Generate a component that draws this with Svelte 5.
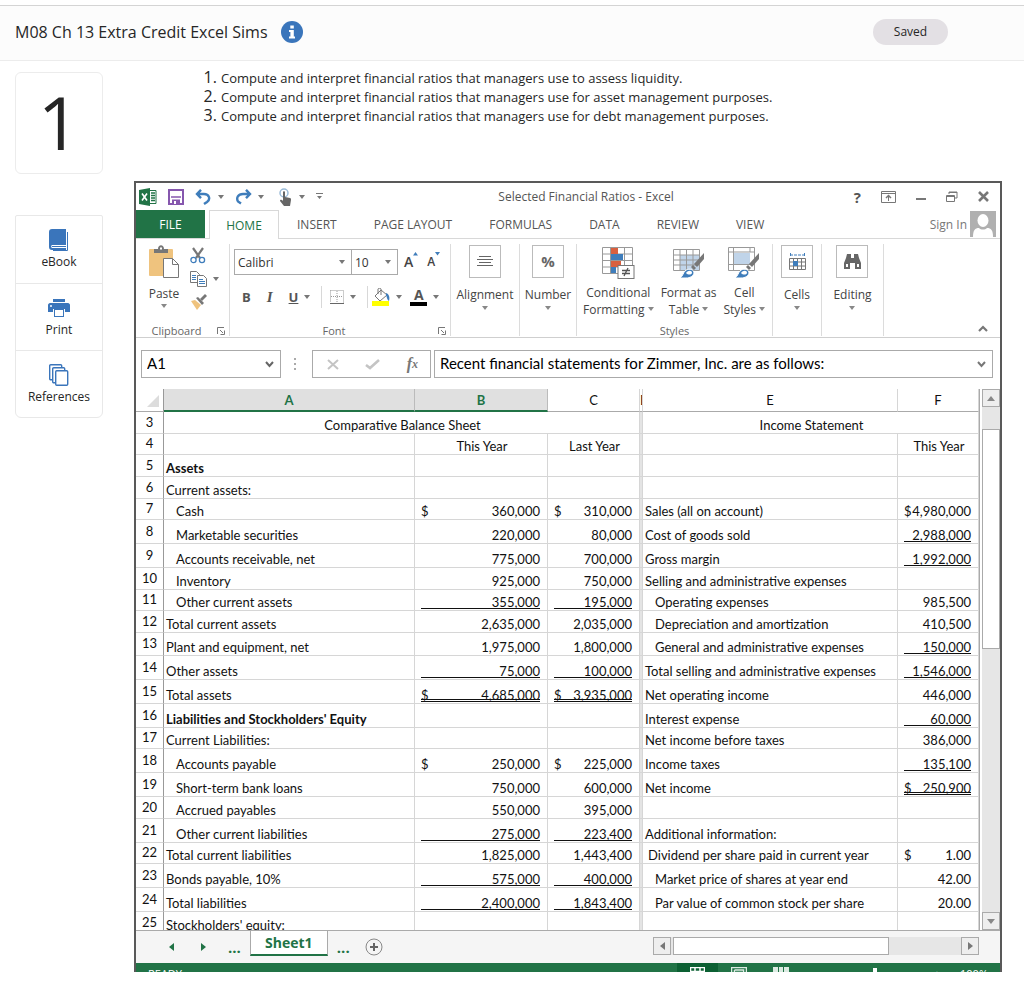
<script lang="ts">
    type Money = { v: string; d?: boolean; u?: 1 | 2 };
    type Row = {
        n: number;
        h: number;
        a?: string;
        bold?: boolean;
        ai?: boolean;
        b?: Money;
        c?: Money;
        e?: string;
        ei?: number;
        f?: Money;
    };

    const objectives = [
        'Compute and interpret financial ratios that managers use to assess liquidity.',
        'Compute and interpret financial ratios that managers use for asset management purposes.',
        'Compute and interpret financial ratios that managers use for debt management purposes.'
    ];

    const tabs = ['INSERT', 'PAGE LAYOUT', 'FORMULAS', 'DATA', 'REVIEW', 'VIEW'];

    const rows: Row[] = [
        { n: 5, h: 22, a: 'Assets', bold: true },
        { n: 6, h: 22, a: 'Current assets:' },
        { n: 7, h: 21, a: 'Cash', ai: true, b: { v: '360,000', d: true }, c: { v: '310,000', d: true }, e: 'Sales (all on account)', f: { v: '4,980,000', d: true } },
        { n: 8, h: 24, a: 'Marketable securities', ai: true, b: { v: '220,000' }, c: { v: '80,000' }, e: 'Cost of goods sold', f: { v: '2,988,000', u: 1 } },
        { n: 9, h: 24, a: 'Accounts receivable, net', ai: true, b: { v: '775,000' }, c: { v: '700,000' }, e: 'Gross margin', f: { v: '1,992,000', u: 1 } },
        { n: 10, h: 22, a: 'Inventory', ai: true, b: { v: '925,000' }, c: { v: '750,000' }, e: 'Selling and administrative expenses' },
        { n: 11, h: 21, a: 'Other current assets', ai: true, b: { v: '355,000', u: 1 }, c: { v: '195,000', u: 1 }, e: 'Operating expenses', ei: 10, f: { v: '985,500' } },
        { n: 12, h: 22, a: 'Total current assets', b: { v: '2,635,000' }, c: { v: '2,035,000' }, e: 'Depreciation and amortization', ei: 10, f: { v: '410,500' } },
        { n: 13, h: 23, a: 'Plant and equipment, net', b: { v: '1,975,000' }, c: { v: '1,800,000' }, e: 'General and administrative expenses', ei: 10, f: { v: '150,000', u: 1 } },
        { n: 14, h: 24, a: 'Other assets', b: { v: '75,000', u: 1 }, c: { v: '100,000', u: 1 }, e: 'Total selling and administrative expenses', f: { v: '1,546,000', u: 1 } },
        { n: 15, h: 24, a: 'Total assets', b: { v: '4,685,000', d: true, u: 2 }, c: { v: '3,935,000', d: true, u: 2 }, e: 'Net operating income', f: { v: '446,000' } },
        { n: 16, h: 24, a: "Liabilities and Stockholders' Equity", bold: true, e: 'Interest expense', f: { v: '60,000', u: 1 } },
        { n: 17, h: 21, a: 'Current Liabilities:', e: 'Net income before taxes', f: { v: '386,000' } },
        { n: 18, h: 24, a: 'Accounts payable', ai: true, b: { v: '250,000', d: true }, c: { v: '225,000', d: true }, e: 'Income taxes', f: { v: '135,100', u: 1 } },
        { n: 19, h: 24, a: 'Short-term bank loans', ai: true, b: { v: '750,000' }, c: { v: '600,000' }, e: 'Net income', f: { v: '250,900', d: true, u: 2 } },
        { n: 20, h: 22, a: 'Accrued payables', ai: true, b: { v: '550,000' }, c: { v: '395,000' } },
        { n: 21, h: 24, a: 'Other current liabilities', ai: true, b: { v: '275,000', u: 1 }, c: { v: '223,400', u: 1 }, e: 'Additional information:' },
        { n: 22, h: 21, a: 'Total current liabilities', b: { v: '1,825,000' }, c: { v: '1,443,400' }, e: 'Dividend per share paid in current year', ei: 4, f: { v: '1.00', d: true } },
        { n: 23, h: 24, a: 'Bonds payable, 10%', b: { v: '575,000', u: 1 }, c: { v: '400,000', u: 1 }, e: 'Market price of shares at year end', ei: 10, f: { v: '42.00' } },
        { n: 24, h: 24, a: 'Total liabilities', b: { v: '2,400,000', u: 1 }, c: { v: '1,843,400', u: 1 }, e: 'Par value of common stock per share', ei: 10, f: { v: '20.00' } },
        { n: 25, h: 22, a: "Stockholders' equity:" }
    ];

    let font = 'Calibri';
    let size = '10';
    let cell = 'A1';
    let formula = 'Recent financial statements for Zimmer, Inc. are as follows:';
</script>

{#snippet arrow()}
    <svg class="arrow" width="6" height="4" viewBox="0 0 6 4" aria-hidden="true"><path d="M0 0h6L3 4z" /></svg>
{/snippet}

{#snippet launcher()}
    <svg width="8" height="8" viewBox="0 0 8 8" fill="none" stroke="#777" aria-hidden="true">
        <path d="M.5 7V.5H7M3 3l3 3M7.500 3.500v4h-4" />
    </svg>
{/snippet}

{#snippet brush()}
    <path d="M31 7v6l-7 8-3-3z" fill="#777" />
    <path d="M20 19l3 3-2 2-3-3z" fill="#777" />
    <path d="M7 32c3-2 3-5 5-7 3-3 8-2 9 1 0 4-4 6-8 6z" fill="#3f7dbb" stroke="#fff" />
    <path d="M13 27c2-3 6-3 6 0-1 2-4 2-6 0z" fill="#fff" />
{/snippet}

{#snippet money(m: Money | undefined)}
    {#if m}
        <div class="money" class:single={m.u === 1} class:double={m.u === 2}>
            <span>{m.d ? '$' : ''}</span><span>{m.v}</span>
        </div>
    {/if}
{/snippet}

<header class="page-head">
    <h1>M08 Ch 13 Extra Credit Excel Sims</h1>
    <button class="info" aria-label="Information">
        <svg width="22" height="22" viewBox="0 0 22 22">
            <circle cx="11" cy="11" r="11" fill="#3a75bb" />
            <path d="M9.300 4.500h3.500v3H9.300zM8 9h4.800v6.500H14v2H8v-2h1.400V11H8z" fill="#fff" />
        </svg>
    </button>
    <button class="saved">Saved</button>
</header>

<div class="page">
    <aside>
        <div class="number">1</div>
        <nav>
            <a href="#ebook">
                <svg width="22" height="24" viewBox="0 0 22 24">
                    <path d="M4 1h14v16H4c-1 0-1 3 0 3h14v2H4c-2 0-3-1-3-3V4c0-2 1-3 3-3z" fill="#3a75bb" />
                    <path d="M4 18.500h14M19.500 4v18.500H5" fill="none" stroke="#3a75bb" />
                </svg>
                eBook
            </a>
            <a href="#print">
                <svg width="22" height="24" viewBox="0 0 22 24">
                    <path d="M5 3h12v3H5zM0 9c0-1 1-2 2-2h18c1 0 2 1 2 2v7h-5v-3H5v3H0z" fill="#3a75bb" />
                    <rect x="6.500" y="13.500" width="9" height="7" fill="#fff" stroke="#3a75bb" />
                    <circle cx="3" cy="10" r="1" fill="#fff" />
                </svg>
                Print
            </a>
            <a href="#references">
                <svg width="22" height="24" viewBox="0 0 22 24" fill="#fff" stroke="#3a75bb" stroke-width="1.400">
                    <rect x="1.700" y="1.700" width="12" height="15" rx="1" />
                    <rect x="4.700" y="4.700" width="12" height="15" rx="1" />
                    <rect x="7.700" y="7.700" width="12" height="14.500" rx="1" />
                </svg>
                References
            </a>
        </nav>
    </aside>

    <main>
        <ol>
            {#each objectives as text}
                <li>{text}</li>
            {/each}
        </ol>

        <section class="excel">
            <div class="titlebar">
                <div class="quick">
                    <svg width="18" height="18" viewBox="0 0 18 18">
                        <path d="M11 2.500h6v13h-6" fill="#fff" stroke="#217346" />
                        <path d="M12 5h4M12 7.500h4M12 10h4M12 12.500h4" stroke="#217346" stroke-width="1.500" />
                        <path d="M0 2l11-2v18L0 16z" fill="#217346" />
                        <path d="M3 5.500l5 7M8 5.500l-5 7" stroke="#fff" stroke-width="1.600" />
                    </svg>
                    <button aria-label="Save">
                        <svg width="16" height="16" viewBox="0 0 16 16" fill="none" stroke="#8657ae" stroke-width="2">
                            <path d="M1 1h14v14H1z" />
                            <path d="M3 8h10" stroke-width="1.500" />
                            <path d="M4 10.500h8V15H4z" fill="#8657ae" stroke="none" />
                            <path d="M6 12h2v3H6z" fill="#fff" stroke="none" />
                        </svg>
                    </button>
                    <button aria-label="Undo">
                        <svg width="17" height="16" viewBox="0 0 17 16" fill="none" stroke="#3f7dbb" stroke-width="2.400">
                            <path d="M6 .8L2 5l4 4.200M2 5h7c5 0 7 5 3 8l-3 2" />
                        </svg>
                        {@render arrow()}
                    </button>
                    <button aria-label="Redo">
                        <svg width="17" height="16" viewBox="0 0 17 16" fill="none" stroke="#3f7dbb" stroke-width="2.400">
                            <path d="M11 .8L15 5l-4 4.200M15 5H8C3 5 1 9 3 12.500l3 2" />
                        </svg>
                        {@render arrow()}
                    </button>
                    <button class="touch" aria-label="Touch mode">
                        <svg width="15" height="18" viewBox="0 0 15 18">
                            <circle cx="6" cy="5" r="4" fill="none" stroke="#9abbd8" stroke-width="1.500" />
                            <path d="M5 4c0-1 2-1 2 0v5l5 1c1 0 1 1 1 2l-1 6H6l-4-5c0-1 1-2 3 0z" fill="#666" />
                        </svg>
                        {@render arrow()}
                    </button>
                    <button aria-label="Customize">
                        <svg width="7" height="7" viewBox="0 0 7 7" fill="#777"><path d="M0 0h7v1H0zM1 3h5L3.500 6z" /></svg>
                    </button>
                </div>
                <div class="doc">Selected Financial Ratios - Excel</div>
                <div class="sys">
                    <button aria-label="Help"><b>?</b></button>
                    <button aria-label="Ribbon options">
                        <svg width="15" height="12" viewBox="0 0 15 12" fill="none" stroke="#777">
                            <path d="M.5.500h14v11H.5zM.5 2.500h14M7.500 10V5" />
                            <path d="M5 7l2.500-2.500L10 7" stroke-width="1.500" />
                        </svg>
                    </button>
                    <button aria-label="Minimize">
                        <svg width="10" height="10" viewBox="0 0 10 10"><path d="M0 6h10v2H0z" fill="#777" /></svg>
                    </button>
                    <button aria-label="Restore">
                        <svg width="12" height="11" viewBox="0 0 12 11" fill="none" stroke="#777">
                            <path d="M3 3V1h8v6H9M3 1.500h8" />
                            <path d="M.5 4.500h8v6h-8zM.5 5.500h8" />
                        </svg>
                    </button>
                    <button aria-label="Close">
                        <svg width="11" height="11" viewBox="0 0 11 11" stroke="#777" stroke-width="2.600"><path d="M1 1l9 9M10 1l-9 9" /></svg>
                    </button>
                </div>
            </div>

            <div class="tabs">
                <button class="file">FILE</button>
                <button class="home">HOME</button>
                {#each tabs as tab}
                    <button>{tab}</button>
                {/each}
                <a class="sign" href="#signin">
                    Sign In
                    <svg width="26" height="26" viewBox="0 0 26 26">
                        <rect width="26" height="26" fill="#b0b0b0" />
                        <ellipse cx="13" cy="9.500" rx="5.500" ry="6.500" fill="#fff" />
                        <path d="M3 26c0-7 2-9 6-9 2 2 6 2 8 0 4 0 6 2 6 9z" fill="#fff" />
                    </svg>
                </a>
            </div>

            <div class="ribbon">
                <div class="group clipboard">
                    <div class="body">
                        <button class="tool paste">
                            <svg width="32" height="34" viewBox="0 0 32 34">
                                <rect x="1" y="4" width="24" height="27" rx="1" fill="#efc37e" />
                                <path d="M6 8V4h4c0-5 6-5 6 0h4v4z" fill="#777" />
                                <rect x="12" y="2.500" width="2" height="2" fill="#fff" />
                                <path d="M15.500 13.500h9l6 6v13h-15z" fill="#fff" stroke="#777" />
                                <path d="M24.500 13.500v6h6" fill="none" stroke="#777" />
                            </svg>
                            <span>Paste</span>
                            {@render arrow()}
                        </button>
                        <div class="small">
                            <button aria-label="Cut">
                                <svg width="16" height="17" viewBox="0 0 16 17" fill="none">
                                    <path d="M3 1l7 10M13 1L6 11" stroke="#777" stroke-width="2.200" />
                                    <circle cx="3.500" cy="13" r="2.600" stroke="#3f7dbb" stroke-width="1.300" />
                                    <circle cx="12" cy="13" r="2.600" stroke="#3f7dbb" stroke-width="1.300" />
                                </svg>
                            </button>
                            <button aria-label="Copy">
                                <svg width="17" height="16" viewBox="0 0 17 16" fill="#fff" stroke="#777">
                                    <path d="M.5.500h6l3 3v8h-9z" />
                                    <path d="M2 4.500h4M2 6.500h4M2 8.500h4" stroke="#3f7dbb" />
                                    <path d="M7.500 4.500h6l3 3v8h-9z" />
                                    <path d="M9 8.500h4M9 10.500h6M9 12.500h6" stroke="#3f7dbb" />
                                </svg>
                                {@render arrow()}
                            </button>
                            <button aria-label="Format painter">
                                <svg width="17" height="16" viewBox="0 0 17 16">
                                    <path d="M1 7l4-1 6 5-4 5z" fill="#efc37e" />
                                    <path d="M6 4l2-1 6 6-2 2z" fill="#777" />
                                    <path d="M10 5l5-5 2 2-5 5z" fill="#777" />
                                </svg>
                            </button>
                        </div>
                    </div>
                    <div class="caption"><span>Clipboard</span>{@render launcher()}</div>
                </div>

                <div class="group font">
                    <div class="body col">
                        <div class="line pick">
                            <div class="select face">
                                <select aria-label="Font" bind:value={font}><option>Calibri</option></select>
                                {@render arrow()}
                            </div>
                            <div class="select pt">
                                <select aria-label="Font size" bind:value={size}><option>10</option></select>
                                {@render arrow()}
                            </div>
                            <button class="grow" aria-label="Increase font size">
                                A<svg width="5" height="4" viewBox="0 0 5 4"><path d="M0 3.500L2.500 0 5 3.500z" fill="#3f7dbb" /></svg>
                            </button>
                            <button class="grow shrink" aria-label="Decrease font size">
                                A<svg width="5" height="4" viewBox="0 0 5 4"><path d="M0 0h5L2.500 3.500z" fill="#3f7dbb" /></svg>
                            </button>
                        </div>
                        <div class="line format">
                            <button class="letter" aria-label="Bold"><b>B</b></button>
                            <button class="letter" aria-label="Italic"><i>I</i></button>
                            <button aria-label="Underline"><u>U</u>{@render arrow()}</button>
                            <span class="sep"></span>
                            <button aria-label="Borders">
                                <svg width="14" height="14" viewBox="0 0 14 14" fill="none" stroke="#999">
                                    <path d="M.5.500h13v12M.5.500v12M7 1v12M1 6.500h12" stroke-dasharray="1 1" />
                                    <path d="M0 13.500h14" stroke="#666" />
                                </svg>
                                {@render arrow()}
                            </button>
                            <span class="sep last"></span>
                            <button aria-label="Fill color">
                                <svg width="18" height="18" viewBox="0 0 18 18">
                                    <path d="M3 8l6-6 6 5-7 6z" fill="#fff" stroke="#777" />
                                    <path d="M6 6V1c0-1 3-1 3 0v6" fill="none" stroke="#777" />
                                    <path d="M14 5c3 1 4 4 3 8-2-1-2-4-3-6z" fill="#3f7dbb" />
                                    <path d="M0 13h17v5H0z" fill="#ffff00" />
                                </svg>
                                {@render arrow()}
                            </button>
                            <button class="color" aria-label="Font color"><b>A</b>{@render arrow()}</button>
                        </div>
                    </div>
                    <div class="caption"><span>Font</span>{@render launcher()}</div>
                </div>

                <div class="group narrow">
                    <button class="tool">
                        <span class="frame">
                            <svg width="16" height="14" viewBox="0 0 16 14" stroke="#666"><path d="M2 1.500h12M0 4.500h16M2 7.500h12M0 10.500h16" /></svg>
                        </span>
                        <span>Alignment</span>
                        {@render arrow()}
                    </button>
                </div>
                <div class="group number-group">
                    <button class="tool">
                        <span class="frame"><b>%</b></span>
                        <span>Number</span>
                        {@render arrow()}
                    </button>
                </div>

                <div class="group styles">
                    <div class="body">
                        <button class="tool">
                            <svg width="33" height="34" viewBox="0 0 33 34">
                                <path d="M.5 1.500h30v26H.5zM8.500 1v26M22.500 1v26M.5 8h30M.5 14.500h30M.5 21h30" fill="#fff" stroke="#999" />
                                <path d="M9 2h7v6H9zM9 15h10v6H9z" fill="#d9603f" />
                                <path d="M9 8h12v6H9zM9 21h5v6H9z" fill="#3f7dbb" />
                                <rect x="16" y="19.500" width="16" height="13" fill="#fff" stroke="#777" />
                                <path d="M20 24.500h8M20 27.500h8M26 22l-4 8" stroke="#555" stroke-width="1.300" />
                            </svg>
                            <span>Conditional<br />Formatting {@render arrow()}</span>
                        </button>
                        <button class="tool">
                            <svg width="32" height="34" viewBox="0 0 32 34">
                                <path d="M.5 3.500h26v21H.5z" fill="#fff" stroke="#999" />
                                <path d="M7 9h19v15H7z" fill="#c0d4e9" />
                                <path d="M7 4v20M13.500 4v20M20 4v20M1 9h25M1 14h25M1 19h25" stroke="#999" />
                                {@render brush()}
                            </svg>
                            <span>Format as<br />Table {@render arrow()}</span>
                        </button>
                        <button class="tool">
                            <svg width="32" height="34" viewBox="0 0 32 34">
                                <path d="M.5 1.500h26v23H.5zM5.500 1v23M.5 6h26M.5 18.500h26M22 1v5" fill="#fff" stroke="#999" />
                                <path d="M6 7h16v11H6z" fill="#c0d4e9" />
                                {@render brush()}
                            </svg>
                            <span>Cell<br />Styles {@render arrow()}</span>
                        </button>
                    </div>
                    <div class="caption"><span>Styles</span></div>
                </div>

                <div class="group cells">
                    <button class="tool">
                        <span class="frame">
                            <svg width="17" height="18" viewBox="0 0 17 18" fill="none" stroke="#777">
                                <path d="M1 2h15M1.500 0v4M15.500 0v4" stroke="#3f7dbb" stroke-dasharray="3 1" />
                                <path d="M.5 5.500h16v11H.5zM4.500 5v11M8.500 5v11M12.500 5v11M.5 9h16M.5 13h16" />
                                <path d="M4 8h5v5H4z" fill="#3f7dbb" stroke="none" />
                            </svg>
                        </span>
                        <span>Cells</span>
                        {@render arrow()}
                    </button>
                </div>
                <div class="group editing">
                    <button class="tool">
                        <span class="frame">
                            <svg width="17" height="15" viewBox="0 0 17 15" fill="#666">
                                <path d="M3 0h4v4h3V0h4l1 4 2 5v6h-6V9H6v6H0V9l2-5z" />
                                <path d="M2 10h2v3H2zM13 10h2v3h-2z" fill="#fff" />
                            </svg>
                        </span>
                        <span>Editing</span>
                        {@render arrow()}
                    </button>
                </div>
                <button class="collapse" aria-label="Collapse ribbon">
                    <svg width="10" height="7" viewBox="0 0 10 7" fill="none" stroke="#777" stroke-width="2.200"><path d="M1 6l4-4 4 4" /></svg>
                </button>
            </div>

            <div class="formula">
                <div class="name-box">
                    <input aria-label="Name box" bind:value={cell} />
                    <svg width="9" height="7" viewBox="0 0 9 7" fill="none" stroke="#666" stroke-width="2"><path d="M1 1l3.500 4L8 1" /></svg>
                </div>
                <svg class="dots" width="3" height="12" viewBox="0 0 3 12" fill="#aaa"><path d="M0 0h2v2H0zM0 5h2v2H0zM0 10h2v2H0z" /></svg>
                <div class="fx">
                    <button aria-label="Cancel">
                        <svg width="12" height="11" viewBox="0 0 12 11" stroke="#c4c4c4" stroke-width="2"><path d="M1 1l10 9M11 1L1 10" /></svg>
                    </button>
                    <button aria-label="Enter">
                        <svg width="15" height="11" viewBox="0 0 15 11" fill="none" stroke="#c4c4c4" stroke-width="2.600"><path d="M1 6l4 3 9-8" /></svg>
                    </button>
                    <button class="fn" aria-label="Insert function">f<small>x</small></button>
                </div>
                <div class="entry">
                    <input aria-label="Formula" bind:value={formula} />
                    <svg width="9" height="7" viewBox="0 0 9 7" fill="none" stroke="#777" stroke-width="2"><path d="M1 1l3.500 4L8 1" /></svg>
                </div>
            </div>

            <div class="sheet">
                <div class="grid">
                    <table>
                        <colgroup>
                            <col class="c-n" /><col class="c-a" /><col class="c-b" /><col class="c-c" /><col class="c-d" /><col /><col class="c-f" />
                        </colgroup>
                        <thead>
                            <tr>
                                <th class="corner"><svg width="12" height="12" viewBox="0 0 12 12"><path d="M12 0v12H0z" fill="#dcdcdc" /></svg></th>
                                <th class="on">A</th>
                                <th class="on">B</th>
                                <th>C</th>
                                <th class="d">D</th>
                                <th>E</th>
                                <th>F</th>
                            </tr>
                        </thead>
                        <tbody>
                            <tr style:height="22px">
                                <th>3</th>
                                <td colspan="3" class="mid">Comparative Balance Sheet</td>
                                <td class="d"></td>
                                <td colspan="2" class="mid">Income Statement</td>
                            </tr>
                            <tr style:height="21px">
                                <th>4</th>
                                <td></td>
                                <td class="mid">This Year</td>
                                <td class="mid">Last Year</td>
                                <td class="d"></td>
                                <td></td>
                                <td class="mid">This Year</td>
                            </tr>
                            {#each rows as r}
                                <tr style:height="{r.h}px">
                                    <th>{r.n}</th>
                                    <td class:bold={r.bold} class:indent={r.ai}>{r.a}</td>
                                    <td>{@render money(r.b)}</td>
                                    <td>{@render money(r.c)}</td>
                                    <td class="d"></td>
                                    <td class:nudge={r.ei === 4} class:indent={r.ei === 10}>{r.e ?? ''}</td>
                                    <td>{@render money(r.f)}</td>
                                </tr>
                            {/each}
                        </tbody>
                    </table>
                </div>
                <div class="vscroll">
                    <button aria-label="Scroll up"><svg width="8" height="5" viewBox="0 0 8 5"><path d="M4 0l4 5H0z" fill="#888" /></svg></button>
                    <div class="thumb"></div>
                    <button aria-label="Scroll down"><svg width="8" height="5" viewBox="0 0 8 5"><path d="M0 0h8L4 5z" fill="#888" /></svg></button>
                </div>
            </div>

            <div class="sheets">
                <button aria-label="Previous sheet"><svg width="5" height="8" viewBox="0 0 5 8"><path d="M5 0v8L0 4z" fill="#217346" /></svg></button>
                <button aria-label="Next sheet"><svg width="5" height="8" viewBox="0 0 5 8"><path d="M0 0v8l5-4z" fill="#217346" /></svg></button>
                <span class="more">...</span>
                <button class="current">Sheet1</button>
                <span class="more">...</span>
                <button class="add" aria-label="New sheet">
                    <svg width="18" height="18" viewBox="0 0 18 18" fill="none" stroke="#888">
                        <circle cx="9" cy="9" r="8" />
                        <path d="M9 5v8M5 9h8" stroke="#666" stroke-width="2" />
                    </svg>
                </button>
                <div class="hscroll">
                    <button aria-label="Scroll left"><svg width="5" height="8" viewBox="0 0 5 8"><path d="M5 0v8L0 4z" fill="#777" /></svg></button>
                    <div class="thumb"></div>
                    <button aria-label="Scroll right"><svg width="5" height="8" viewBox="0 0 5 8"><path d="M0 0v8l5-4z" fill="#777" /></svg></button>
                </div>
            </div>

            <div class="status">
                <span class="ready">READY</span>
                <span class="view normal">
                    <svg width="15" height="14" viewBox="0 0 15 14" fill="none" stroke="#fff"><path d="M.5.500h14v12H.5zM5 0v12M10 0v12M0 4.500h15" stroke-width="1.500" /></svg>
                </span>
                <span class="view">
                    <svg width="16" height="14" viewBox="0 0 16 14" fill="none" stroke="#dcebe2"><path d="M.5.500h15v12H.5zM3.500 3h9v10M3.500 3v10M5 5.500h6" stroke-width="1.500" /></svg>
                </span>
                <span class="view">
                    <svg width="16" height="14" viewBox="0 0 16 14" fill="#dcebe2"><path d="M0 0h5v12H0zM6 0h4v8H6zM11 0h5v12h-5z" /></svg>
                </span>
                <span class="knob"></span>
                <span class="plus">+</span>
                <span class="zoom">100%</span>
            </div>
        </section>
    </main>
</div>

<style>
    :global(body) {
        background: #fff;
        color: #262626;
        font-family: "Open Sans", "Noto Sans", sans-serif;
    }

    button {
        display: flex;
        align-items: center;
        margin: 0;
        padding: 0;
        border: 0;
        background: none;
        color: inherit;
        font: inherit;
    }

    a {
        color: inherit;
        text-decoration: none;
    }

    svg {
        display: block;
        flex: none;
    }

    .arrow {
        fill: #777;
    }

    .page-head {
        display: flex;
        align-items: center;
        box-sizing: border-box;
        height: 56px;
        margin-top: 5px;
        padding: 0 76px 3px 15px;
        border-top: 1px solid #d4d4d4;
        border-bottom: 1px solid #ececec;
        background: #fcfcfc;
    }

    h1 {
        margin: 0 13px 0 0;
        font-size: 16px;
        font-weight: 400;
    }

    .saved {
        justify-content: center;
        width: 75px;
        height: 26px;
        margin-left: auto;
        border-radius: 13px;
        background: #e3e0e4;
        font-size: 12px;
    }

    .page {
        display: flex;
        gap: 31px;
        padding: 7px 22px 0 15px;
    }

    aside {
        flex: none;
        width: 88px;
        padding-top: 4px;
    }

    .number {
        height: 100px;
        margin-bottom: 41px;
        border: 1px solid #ececec;
        border-radius: 6px;
        font-size: 74px;
        line-height: 98px;
        text-align: center;
    }

    nav {
        border: 1px solid #e8e8e8;
        border-radius: 2px 2px 6px 6px;
    }

    nav a {
        display: flex;
        flex-direction: column;
        align-items: center;
        box-sizing: border-box;
        height: 67px;
        padding-top: 12px;
        font-size: 12px;
        line-height: 20px;
    }

    nav a + a {
        border-top: 1px solid #e8e8e8;
    }

    main {
        flex: 1;
        min-width: 0;
    }

    ol {
        margin: 0 0 56px;
        padding-left: 87px;
        font-size: 13px;
        line-height: 19px;
    }

    li {
        height: 19px;
    }

    li::marker {
        font-size: 16px;
    }

    .excel {
        border: 2px solid #595959;
        border-bottom: 0;
        color: #555;
        font-size: 12px;
    }

    .titlebar {
        display: flex;
        align-items: center;
        justify-content: space-between;
        height: 27px;
        padding: 0 11px 0 3px;
    }

    .quick {
        display: flex;
        flex: 1;
        align-items: center;
        gap: 11px;
    }

    .quick button {
        gap: 6px;
    }

    .touch {
        margin-left: 3px;
    }

    .doc {
        margin-left: 44px;
    }

    .sys {
        display: flex;
        flex: 1;
        align-items: center;
        justify-content: flex-end;
        gap: 20px;
    }

    .sys b {
        font-size: 15px;
    }

    .tabs {
        display: flex;
        height: 28px;
        border-bottom: 1px solid #d8d8d8;
    }

    .tabs button {
        margin-right: 37px;
    }

    .tabs .file {
        justify-content: center;
        width: 69px;
        margin-right: 4px;
        background: #217346;
        color: #fff;
    }

    .tabs .home {
        justify-content: center;
        box-sizing: border-box;
        width: 70px;
        height: 29px;
        margin-right: 18px;
        border: 1px solid #d8d8d8;
        border-bottom: 0;
        background: #fff;
        color: #217346;
    }

    .sign {
        display: flex;
        align-items: center;
        gap: 3px;
        margin: 0 4px 0 auto;
        color: #777;
    }

    .ribbon {
        display: flex;
        height: 99px;
        padding-top: 1px;
        box-sizing: border-box;
        border-bottom: 1px solid #cfcfcf;
        color: #444;
    }

    .group {
        display: flex;
        flex: none;
        flex-direction: column;
        align-items: center;
        box-sizing: border-box;
        margin: 4px 0 1px;
        border-right: 1px solid #dcdcdc;
    }

    .body {
        display: flex;
        flex: none;
        align-items: flex-start;
        width: 100%;
        height: 80px;
    }

    .col {
        flex-direction: column;
    }

    .caption {
        display: flex;
        align-items: center;
        width: 100%;
        height: 13px;
        color: #666;
        font-size: 11px;
    }

    .caption span {
        flex: 1;
        text-align: center;
    }

    .caption svg {
        margin-right: 4px;
    }

    .tool {
        flex-direction: column;
        line-height: 17px;
    }

    .tool > span:not(.frame) {
        margin: 8px 0 3px;
    }

    .tool .arrow {
        fill: #888;
    }

    .tool span .arrow {
        display: inline-block;
        vertical-align: 3px;
    }

    .frame {
        display: flex;
        align-items: center;
        justify-content: center;
        box-sizing: border-box;
        width: 32px;
        height: 33px;
        margin-top: 1px;
        border: 1px solid #bbb;
        color: #666;
        font-size: 15px;
    }

    .clipboard {
        width: 94px;
    }

    .clipboard .paste {
        margin: 1px 10px 0 12px;
    }

    .clipboard .paste > span {
        margin: 6px 0 2px;
    }

    .small {
        display: flex;
        flex-direction: column;
        gap: 7px;
        padding-top: 3px;
    }

    .small button {
        gap: 6px;
    }

    .font {
        width: 221px;
    }

    .line {
        display: flex;
        align-items: center;
    }

    .pick {
        margin: 5px 0 0 4px;
    }

    .select {
        display: flex;
        align-items: center;
        box-sizing: border-box;
        height: 26px;
        padding-right: 6px;
        border: 1px solid #aaa;
    }

    .select + .select {
        border-left: 0;
    }

    .face {
        width: 118px;
    }

    .pt {
        width: 46px;
    }

    select {
        flex: 1;
        min-width: 0;
        padding: 0 0 0 3px;
        appearance: none;
        border: 0;
        background: none;
        color: #333;
        font: inherit;
    }

    .grow {
        align-items: flex-start;
        margin-left: 6px;
        font-size: 14px;
        font-weight: 600;
        line-height: 22px;
    }

    .grow svg {
        margin-top: 1px;
    }

    .shrink {
        margin-left: 9px;
        font-size: 12px;
    }

    .format {
        gap: 8px;
        margin: 11px 0 0 12px;
        color: #555;
        font-size: 13px;
    }

    .format button {
        gap: 6px;
    }

    .format .letter {
        margin-right: 5px;
    }

    .format i {
        padding: 0 3px;
        font-family: "Liberation Serif", serif;
        font-size: 15px;
        font-weight: 700;
    }

    .format u {
        font-weight: 700;
    }

    .sep {
        width: 1px;
        height: 22px;
        margin-left: 3px;
        background: #d8d8d8;
    }

    .last {
        margin-right: -4px;
    }

    .color b {
        width: 17px;
        border-bottom: 4px solid #000;
        font-size: 14px;
        line-height: 14px;
        text-align: center;
    }

    .narrow {
        width: 69px;
    }

    .number-group {
        width: 57px;
    }

    .styles {
        width: 196px;
    }

    .styles .body {
        justify-content: space-between;
        box-sizing: border-box;
        padding: 2px 7px 0 6px;
    }

    .styles .tool > span {
        margin: 4px 0 0;
    }

    .cells {
        width: 49px;
    }

    .editing {
        width: 62px;
    }

    .collapse {
        align-self: flex-end;
        margin: 0 12px 5px auto;
    }

    .formula {
        display: flex;
        align-items: center;
        padding: 12px 7px 11px 5px;
    }

    .name-box,
    .fx,
    .entry {
        display: flex;
        align-items: center;
        box-sizing: border-box;
        height: 28px;
        border: 1px solid #aaa;
    }

    .name-box {
        width: 140px;
        padding-right: 6px;
    }

    .dots {
        margin: 0 15px 0 13px;
    }

    .fx {
        justify-content: space-between;
        width: 119px;
        margin-right: 3px;
        padding: 0 12px 0 14px;
    }

    .fn {
        color: #777;
        font: italic 700 16px "Liberation Serif", serif;
    }

    .fn small {
        font-size: 12px;
    }

    .entry {
        flex: 1;
        padding-right: 6px;
    }

    input {
        flex: 1;
        min-width: 0;
        padding: 0 0 2px 5px;
        border: 0;
        outline: 0;
        background: none;
        color: #000;
        font: 15px Lato, sans-serif;
    }

    .sheet {
        display: flex;
        gap: 2px;
        height: 541px;
        border-bottom: 1px solid #aaa;
        overflow: hidden;
    }

    .grid {
        flex: 1;
        min-width: 0;
    }

    table {
        width: 100%;
        table-layout: fixed;
        border-collapse: separate;
        border-spacing: 0;
        border-right: 1px solid #aaa;
        color: #111;
        font: 13px/16px Lato, sans-serif;
    }

    .c-n {
        width: 28px;
    }

    .c-a {
        width: 251px;
    }

    .c-b {
        width: 133px;
    }

    .c-c {
        width: 92px;
    }

    .c-d {
        width: 3px;
    }

    .c-f {
        width: 81px;
    }

    th,
    td {
        box-sizing: border-box;
        padding: 0;
        border-right: 1px solid #d6d6d6;
        border-bottom: 1px solid #d6d6d6;
        white-space: nowrap;
    }

    th {
        font-weight: 400;
        overflow: hidden;
    }

    thead th {
        height: 23px;
        border-bottom-color: #aaa;
    }

    thead .on {
        border-right-color: #bbb;
        border-bottom: 2px solid #217346;
        background: #e0e0e0;
        color: #217346;
        font-weight: 700;
    }

    .corner svg {
        margin: 2px 0 0 11px;
    }

    tbody th,
    .corner {
        border-right-color: #999;
    }

    tbody th {
        padding-bottom: 2px;
    }

    td {
        padding-left: 2px;
        vertical-align: bottom;
    }

    .d {
        background: #e4e4e4;
        padding: 0;
    }

    thead .d {
        background: none;
        text-align: left;
    }

    .mid {
        text-align: center;
    }

    .bold {
        font-weight: 700;
    }

    .indent {
        padding-left: 12px;
    }

    .nudge {
        padding-left: 5px;
    }

    .money {
        display: flex;
        justify-content: space-between;
        box-sizing: border-box;
        height: 15px;
        margin: 0 7px 1px 4px;
        border-bottom: 1px solid transparent;
        line-height: 16px;
    }

    .single {
        border-bottom-color: #111;
    }

    .double {
        border-bottom: 3px double #111;
    }

    .vscroll {
        display: flex;
        flex-direction: column;
        width: 18px;
        background: #e6e6e6;
    }

    .vscroll button,
    .hscroll button {
        justify-content: center;
        box-sizing: border-box;
        width: 18px;
        height: 18px;
        border: 1px solid #aaa;
        background: #eee;
    }

    .thumb {
        box-sizing: border-box;
        border: 1px solid #aaa;
        background: #fff;
    }

    .vscroll .thumb {
        height: 220px;
        margin: 22px 0 auto;
    }

    .sheets {
        display: flex;
        align-items: center;
        height: 32px;
        padding-left: 33px;
        background: #f5f5f5;
        color: #217346;
    }

    .sheets > button:nth-child(2) {
        margin: 0 22px 0 27px;
    }

    .more {
        font-size: 15px;
        font-weight: 700;
    }

    .current {
        justify-content: center;
        align-self: flex-start;
        box-sizing: border-box;
        width: 78px;
        height: 25px;
        margin: 0 9px;
        border: 1px solid #aaa;
        border-top: 0;
        border-bottom: 2px solid #217346;
        background: #fff;
        font-size: 14px;
        font-weight: 700;
    }

    .add {
        margin-left: 15px;
    }

    .hscroll {
        display: flex;
        width: 326px;
        margin: 0 21px 2px auto;
        background: #e6e6e6;
    }

    .hscroll .thumb {
        width: 216px;
        margin: 0 auto 0 2px;
    }

    .status {
        display: flex;
        align-items: flex-start;
        height: 9px;
        overflow: hidden;
        background: #217346;
        color: #fff;
        font-size: 11px;
        line-height: 15px;
    }

    .ready {
        margin: 3px auto 0 12px;
    }

    .view {
        padding: 4px 13px 0;
    }

    .normal {
        background: #0c6033;
    }

    .knob {
        width: 4px;
        height: 12px;
        margin: 5px 57px 0 71px;
        background: #fff;
    }

    .plus {
        margin-top: 3px;
    }

    .zoom {
        margin: 3px 12px 0 20px;
    }
</style>
